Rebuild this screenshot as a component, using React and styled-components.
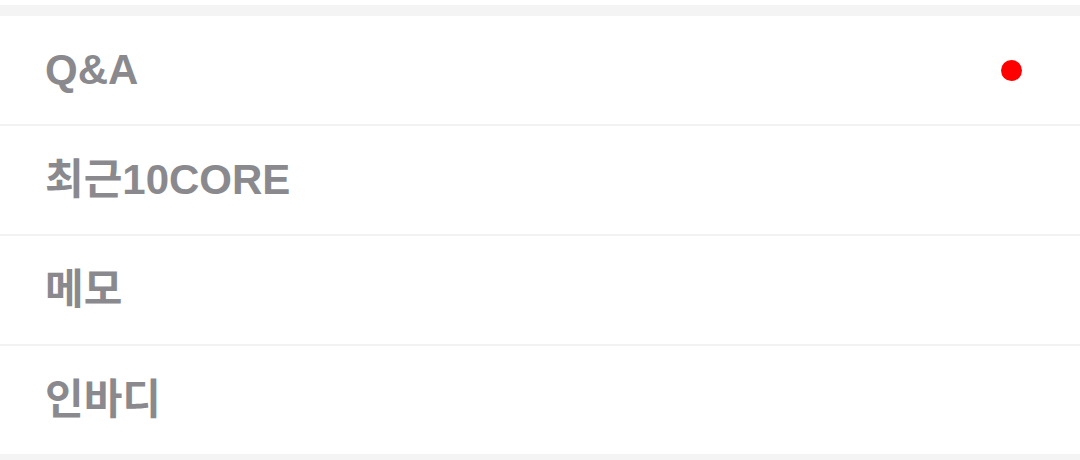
import React from "react";
import styled, { createGlobalStyle } from "styled-components";

const Global = createGlobalStyle`
  html, body { margin: 0; padding: 0; background: #ffffff; }
  body { font-family: "Liberation Sans", "Noto Sans CJK KR", sans-serif; }
`;

const Page = styled.div`
  width: 1080px;
  height: 460px;
  padding-top: 5px;
  box-sizing: border-box;
  background: #ffffff;
  overflow: hidden;
`;

const Band = styled.div`
  height: 11px;
  background: #f4f4f4;
`;

const List = styled.ul`
  list-style: none;
  margin: 0;
  padding: 0;
  background: #f4f4f4;
`;

const Row = styled.li`
  height: 108px;
  display: flex;
  align-items: center;
  justify-content: space-between;
  padding: 0 58px 0 45px;
  background: #ffffff;
  border-bottom: 2px solid #f2f2f2;
  &:last-child { border-bottom: none; }
`;

const Label = styled.span`
  font-family: "Liberation Sans", "Noto Sans CJK KR", sans-serif;
  font-size: 42px;
  font-weight: 700;
  line-height: 1;
  color: #8a8a8e;
`;

const Dot = styled.span`
  width: 21px;
  height: 21px;
  border-radius: 50%;
  background: #ff0000;
`;

const items = [
  { label: "Q&A", badge: true },
  { label: "최근10CORE" },
  { label: "메모" },
  { label: "인바디" },
];

export default function App() {
  return (
    <>
      <Global />
      <Page>
        <Band />
        <List>
          {items.map((it) => (
            <Row key={it.label}>
              <Label>{it.label}</Label>
              {it.badge && <Dot />}
            </Row>
          ))}
        </List>
        <Band />
      </Page>
    </>
  );
}
